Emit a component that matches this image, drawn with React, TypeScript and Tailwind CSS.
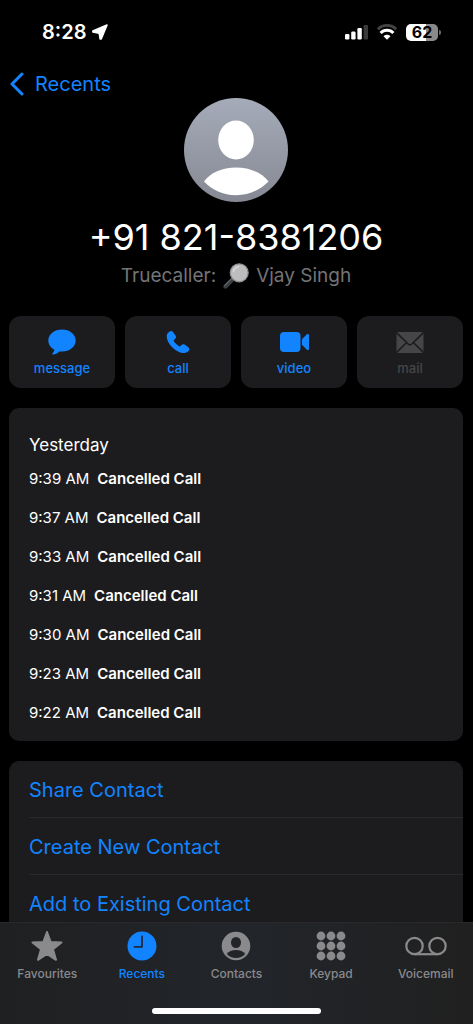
import React from 'react';

type IconProps = { className?: string };

const calls = ['9:39 AM', '9:37 AM', '9:33 AM', '9:31 AM', '9:30 AM', '9:23 AM', '9:22 AM'];

const contactActions = ['Share Contact', 'Create New Contact', 'Add to Existing Contact'];

function LocationIcon() {
  return (
    <svg viewBox="0 0 16 16" className="h-4 w-4 fill-white stroke-white" strokeWidth="1.6" strokeLinejoin="round" aria-hidden="true">
      <path d="M15 1 9.200 15H8.200L7.200 9.200.9 8V7Z" />
    </svg>
  );
}

function SignalIcon() {
  return (
    <svg viewBox="0 0 24 16" className="h-4 w-6 fill-white" aria-hidden="true">
      <rect x="1" y="10" width="4.400" height="5.500" rx="1.200" />
      <rect x="7.200" y="7.500" width="4.400" height="8" rx="1.200" />
      <rect x="13.400" y="4" width="4.400" height="11.500" rx="1.200" />
      <rect x="19.600" y="1" width="4.400" height="14.500" rx="1.200" className="fill-[#3a3a3a]" />
    </svg>
  );
}

function WifiIcon() {
  return (
    <svg viewBox="0 0 22 16" className="h-4 w-[22px]" fill="none" aria-hidden="true">
      <path d="M1.800 5.200a13.200 13.200 0 0 1 18.400 0" stroke="#444" strokeWidth="2.800" />
      <path d="M4.600 9a9 9 0 0 1 12.800 0" stroke="#fff" strokeWidth="3" />
      <path d="M7.500 12.200a5 5 0 0 1 7 0L11 15.800Z" fill="#fff" />
    </svg>
  );
}

function Battery() {
  return (
    <div className="flex items-center gap-px">
      <div className="flex h-[17px] w-8 items-center justify-center rounded-[5px] bg-linear-to-r from-white from-62% to-[#8a8a8a] to-62% text-base leading-none font-bold text-black">
        62
      </div>
      <div className="h-[5px] w-0.5 rounded-r-full bg-[#6a6a6a]" />
    </div>
  );
}

function Avatar() {
  return (
    <svg viewBox="0 0 104 104" className="h-[104px] w-[104px]" role="img" aria-label="Contact photo">
      <defs>
        <linearGradient id="avatar" x1="0" y1="0" x2="0" y2="1">
          <stop offset="0" stopColor="#a5abb9" />
          <stop offset="1" stopColor="#868993" />
        </linearGradient>
      </defs>
      <circle cx="52" cy="52" r="52" fill="url(#avatar)" />
      <ellipse cx="52" cy="42" rx="17.800" ry="19.500" fill="#fff" />
      <path d="M20 83.500C26 75 38 69.500 52 69.500S78 75 84.500 83.500C76 92 65 97.200 52 97.200S28 92 20 83.500Z" fill="#fff" />
    </svg>
  );
}

function MagnifierIcon() {
  return (
    <svg viewBox="0 0 26 26" className="h-[26px] w-[26px]" aria-hidden="true">
      <path d="M10.500 15.500 2.500 23.500" stroke="#3c4043" strokeWidth="4.200" strokeLinecap="round" />
      <path d="M9.500 14.800 1.800 22.500" stroke="#74787b" strokeWidth="1" strokeLinecap="round" />
      <circle cx="16.200" cy="9.800" r="9" fill="#bdbdbf" stroke="#8c8c8e" strokeWidth="1.200" />
      <path d="M10.500 8.500a6.200 6.200 0 0 1 5-4.800" stroke="#d8d8da" strokeWidth="1.500" fill="none" strokeLinecap="round" />
    </svg>
  );
}

function MessageIcon({ className }: IconProps) {
  return (
    <svg viewBox="0 0 28 26" className={className} fill="currentColor" aria-hidden="true">
      <path d="M14 .5C6.400.5.300 5.400.300 11.500c0 3.900 2.400 7.300 6.200 9.300-.3 1.300-1.100 2.500-2.100 3.600-.4.500-.1 1.200.6 1.100 2.500-.3 5-1.500 6.700-3.100.8.100 1.500.1 2.300.1 7.600 0 13.700-4.900 13.700-11S21.600.5 14 .5Z" />
    </svg>
  );
}

function PhoneIcon({ className }: IconProps) {
  return (
    <svg viewBox="0 0 24 24" className={className} fill="currentColor" aria-hidden="true">
      <path d="M16.700 23c-3 0-7.300-2.400-10.500-5.700C3 14 .7 9.800.7 6.400c0-1.900.8-3.300 2.500-4.600C4.600.7 6.200.9 7.200 2.300l2.300 3.300c.8 1.200.7 2.200-.3 3.200L8 10c-.4.400-.4.800-.1 1.300.5.900 1.400 1.900 2.400 2.800 1 1 1.800 1.700 2.700 2.200.5.300.9.200 1.300-.2l1.200-1.200c.9-.9 2-1 3.100-.3l3.400 2.300c1.500 1 1.700 2.500.6 4-1.400 1.500-3.300 2.100-5.900 2.100Z" />
    </svg>
  );
}

function VideoIcon({ className }: IconProps) {
  return (
    <svg viewBox="0 0 30 20" className={className} fill="currentColor" aria-hidden="true">
      <rect x="1" y="0" width="20.500" height="20" rx="4" />
      <path d="M23 7.200 27.600 2.500c1-1 2.400-.7 2.400.7v13.600c0 1.400-1.400 1.700-2.400.7L23 12.800Z" />
    </svg>
  );
}

function MailIcon({ className }: IconProps) {
  return (
    <svg viewBox="0 0 28 21" className={className} aria-hidden="true">
      <rect x="0.500" y="0" width="27" height="21" rx="2.500" fill="currentColor" />
      <path d="M1 1.200 12.200 12c1.200 1.100 2.400 1.100 3.600 0L27 1.200M1 19.800l9.700-9.300M27 19.800l-9.700-9.300" fill="none" stroke="#1c1c1e" strokeWidth="1.600" />
    </svg>
  );
}

function StarIcon() {
  return (
    <svg viewBox="0 0 32 32" className="h-8 w-8" fill="currentColor" stroke="currentColor" strokeWidth="2" strokeLinejoin="round" aria-hidden="true">
      <path d="m16 2 3.600 9.900 10.900.5-8.500 6.800 3 10.600-9-6-9 6 3-10.600-8.500-6.800 10.900-.5Z" />
    </svg>
  );
}

function ClockIcon() {
  return (
    <svg viewBox="0 0 30 30" className="h-[30px] w-[30px]" aria-hidden="true">
      <circle cx="15" cy="15" r="14.500" fill="currentColor" />
      <path d="M15 5.500v10.300H7.500" fill="none" stroke="#1d2a3c" strokeWidth="1.800" strokeLinecap="round" strokeLinejoin="round" />
    </svg>
  );
}

function PersonIcon() {
  return (
    <svg viewBox="0 0 30 30" className="h-[30px] w-[30px]" aria-hidden="true">
      <circle cx="15" cy="15" r="14.300" fill="currentColor" />
      <ellipse cx="15" cy="11.500" rx="5" ry="5.600" fill="#222427" />
      <path d="M5.800 23C7.700 20.500 11 19 15 19s7.300 1.500 9.200 4c-2.300 2.600-5.500 4.100-9.200 4.100S8.100 25.600 5.800 23Z" fill="#222427" />
    </svg>
  );
}

function KeypadIcon() {
  return (
    <svg viewBox="0 0 30 30" className="h-[30px] w-[30px]" fill="currentColor" aria-hidden="true">
      {[5, 15, 25].map((y) =>
        [5, 15, 25].map((x) => <circle key={`${x}-${y}`} cx={x} cy={y} r="4.400" />)
      )}
    </svg>
  );
}

function VoicemailIcon() {
  return (
    <svg viewBox="0 0 42 20" className="h-5 w-[42px]" fill="none" stroke="currentColor" strokeWidth="2.200" aria-hidden="true">
      <circle cx="9.500" cy="10" r="8.200" />
      <circle cx="32.500" cy="10" r="8.200" />
      <path d="M9.500 18.200h23" />
    </svg>
  );
}

const quickActions = [
  { label: 'message', icon: <MessageIcon className="h-[26px] w-7" />, disabled: false },
  { label: 'call', icon: <PhoneIcon className="h-6 w-6" />, disabled: false },
  { label: 'video', icon: <VideoIcon className="h-5 w-[30px]" />, disabled: false },
  { label: 'mail', icon: <MailIcon className="h-[21px] w-7" />, disabled: true },
];

const tabs = [
  { label: 'Favourites', icon: <StarIcon />, active: false },
  { label: 'Recents', icon: <ClockIcon />, active: true },
  { label: 'Contacts', icon: <PersonIcon />, active: false },
  { label: 'Keypad', icon: <KeypadIcon />, active: false },
  { label: 'Voicemail', icon: <VoicemailIcon />, active: false },
];

export default function App() {
  return (
    <div className="flex h-screen flex-col bg-black font-[Inter,'Liberation_Sans',sans-serif] text-white">
      {/* Status bar */}
      <div className="flex h-16 shrink-0 items-center justify-between pr-8 pl-[42px]">
        <div className="flex items-center gap-1.5">
          <span className="text-xl font-semibold">8:28</span>
          <LocationIcon />
        </div>
        <div className="flex items-center gap-2">
          <SignalIcon />
          <WifiIcon />
          <Battery />
        </div>
      </div>

      <main className="min-h-0 flex-1 overflow-y-auto pr-2.5 pl-[9px] [scrollbar-width:none]">
        <header className="flex flex-col items-center">
          <a href="#recents" className="flex h-[34px] items-center gap-2.5 self-start pt-1.5 text-xl text-[#1284ff]">
            <svg viewBox="0 0 16 24" className="h-6 w-4" fill="none" stroke="currentColor" strokeWidth="3" strokeLinecap="round" strokeLinejoin="round" aria-hidden="true">
              <path d="M13 2 3 12l10 10" />
            </svg>
            Recents
          </a>
          <Avatar />
          <h1 className="mt-3 text-4xl leading-[46px]">+91 821-8381206</h1>
          <p className="mt-0.5 flex h-7 items-center gap-[7px] text-[19px] text-[#747476]">
            Truecaller: <MagnifierIcon /> Vjay Singh
          </p>
        </header>

        {/* Quick actions */}
        <div className="mt-[26px] grid grid-cols-4 gap-2.5">
          {quickActions.map(({ label, icon, disabled }) => (
            <button
              key={label}
              disabled={disabled}
              className="flex h-[72px] flex-col items-center rounded-xl bg-[#1c1c1e] pt-3 text-[#1284ff] disabled:text-[#464648]"
            >
              <span className="flex h-7 items-center">{icon}</span>
              <span className="text-[13px] leading-6 font-medium">{label}</span>
            </button>
          ))}
        </div>

        {/* Call history */}
        <section className="mt-5 rounded-[10px] bg-[#1c1c1e] px-5 pt-[22px] pb-2">
          <h2 className="text-[17px] leading-[30px]">Yesterday</h2>
          <ul>
            {calls.map((time) => (
              <li key={time} className="flex h-[39px] items-center gap-2 text-[15px]">
                <span>{time}</span>
                <span className="font-semibold">Cancelled Call</span>
              </li>
            ))}
          </ul>
        </section>

        <section className="mt-5 rounded-[10px] bg-[#1c1c1e] pl-5">
          {contactActions.map((action) => (
            <button
              key={action}
              className="block h-[57px] w-full border-b border-[#29292b] pt-px text-left text-xl text-[#1284ff] last:border-b-0"
            >
              {action}
            </button>
          ))}
        </section>
      </main>

      {/* Tab bar */}
      <nav className="shrink-0 border-t border-[#29292b] bg-linear-to-r from-[#1f2021] via-[#22252a] to-[#202020] pb-2.5">
        <div className="grid grid-cols-5">
          {tabs.map(({ label, icon, active }) => (
            <a
              key={label}
              href={`#${label.toLowerCase()}`}
              className={`flex flex-col items-center pt-[7px] ${active ? 'text-[#1284ff]' : 'text-[#8a8a8c]'}`}
            >
              <span className="flex h-8 items-center">{icon}</span>
              <span className="mt-0.5 text-xs leading-5 font-medium">{label}</span>
            </a>
          ))}
        </div>
        <div className="mx-auto mt-6 h-1.5 w-[169px] rounded-full bg-white" />
      </nav>
    </div>
  );
}
